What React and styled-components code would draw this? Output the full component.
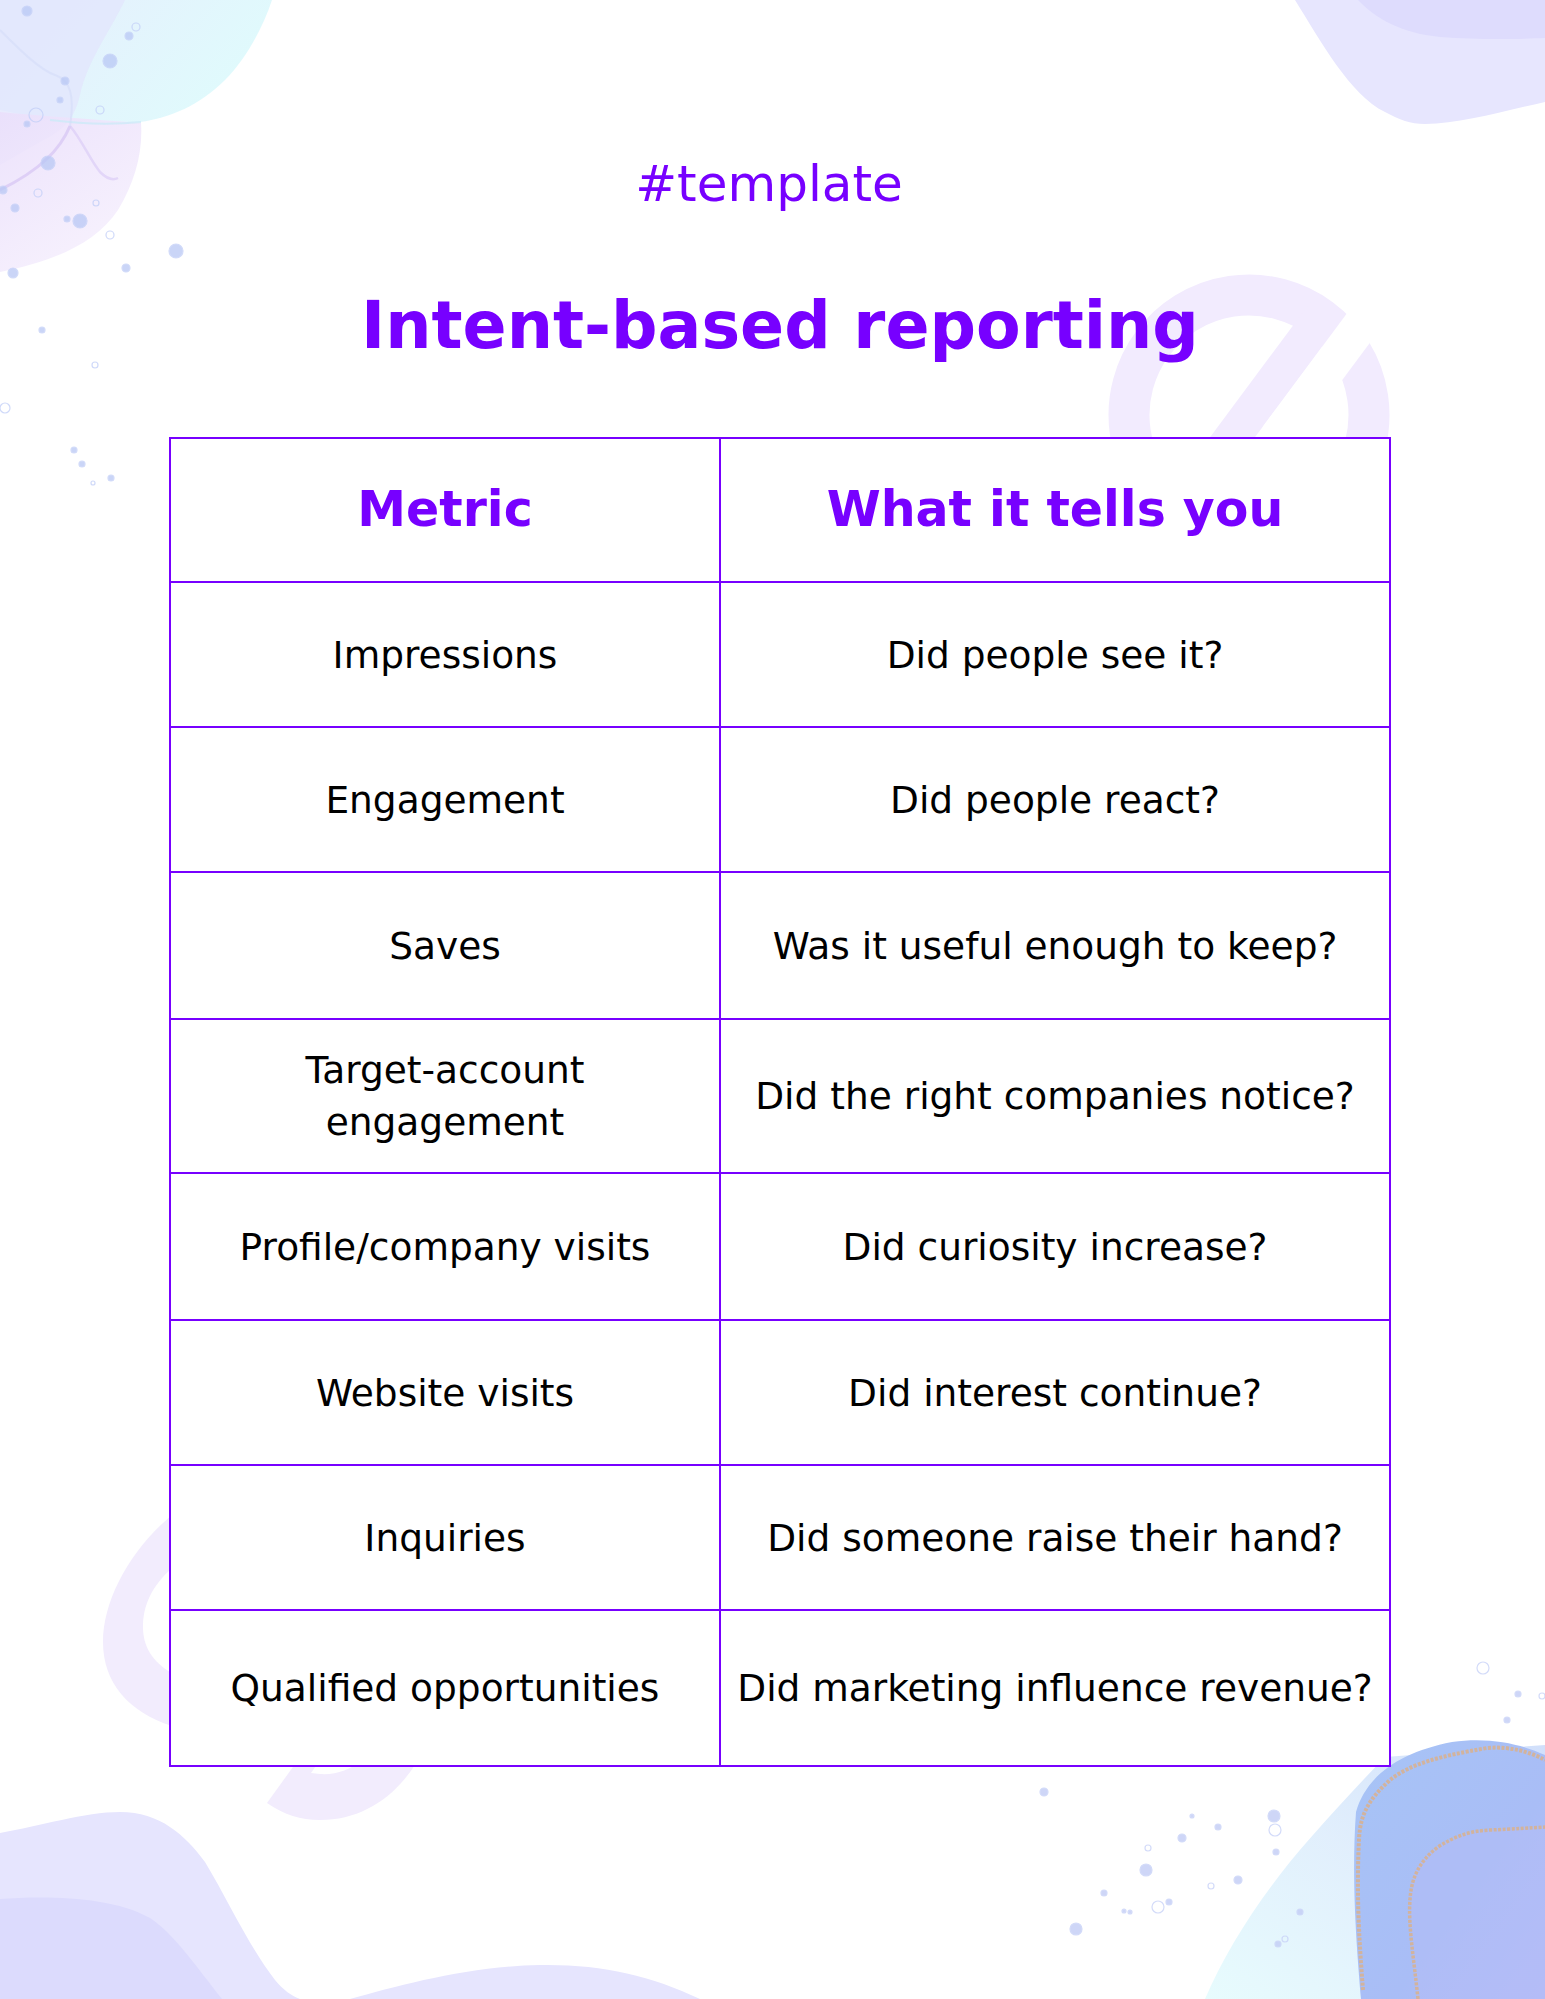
import React from 'react';
import styled, { createGlobalStyle } from 'styled-components';

const GlobalStyle = createGlobalStyle`
  html, body { margin: 0; padding: 0; background: #ffffff; }
  body { font-family: "DejaVu Sans", "Liberation Sans", sans-serif; }
  * { box-sizing: border-box; }
`;

const VIOLET = '#7700ff';

const Page = styled.div`
  position: relative;
  width: 1545px;
  min-height: 1999px;
  overflow: hidden;
  background: #ffffff;
`;

const Backdrop = styled.svg`
  position: absolute;
  inset: 0;
  width: 1545px;
  height: 1999px;
  pointer-events: none;
  z-index: 0;
`;

const Content = styled.main`
  position: relative;
  z-index: 1;
  width: 1222px;
  margin-left: 169px;
  padding-top: 154px;
  display: flex;
  flex-direction: column;
  align-items: center;
`;

const Tag = styled.div`
  font-family: "DejaVu Sans", sans-serif;
  font-weight: 400;
  font-size: 50px;
  line-height: 60px;
  color: ${VIOLET};
  margin-right: 22px;
`;

const Title = styled.h1`
  margin: 72px 0 0;
  font-family: "DejaVu Sans", sans-serif;
  font-weight: 700;
  font-size: 65px;
  line-height: 80px;
  color: ${VIOLET};
`;

const Grid = styled.div`
  margin-top: 71px;
  width: 1222px;
  display: grid;
  grid-template-columns: 550px 670px;
  border-top: 2px solid ${VIOLET};
  border-left: 2px solid ${VIOLET};
  background: #ffffff;
`;

const Cell = styled.div`
  height: ${(p) => p.$h}px;
  border-right: 2px solid ${VIOLET};
  border-bottom: 2px solid ${VIOLET};
  display: flex;
  align-items: center;
  justify-content: center;
  text-align: center;
  padding: 0 8px;
  white-space: pre-line;
  font-family: "DejaVu Sans", sans-serif;
  ${(p) =>
    p.$head
      ? `font-weight: 700; font-size: 49px; line-height: 60px; color: ${VIOLET};`
      : `font-weight: 400; font-size: 37.5px; line-height: 52px; color: #000000;`}
`;

const rows = [
  ['Impressions', 'Did people see it?', 145],
  ['Engagement', 'Did people react?', 145],
  ['Saves', 'Was it useful enough to keep?', 147],
  ['Target-account\nengagement', 'Did the right companies notice?', 154],
  ['Profile/company visits', 'Did curiosity increase?', 147],
  ['Website visits', 'Did interest continue?', 145],
  ['Inquiries', 'Did someone raise their hand?', 145],
  ['Qualified opportunities', 'Did marketing influence revenue?', 156],
];

const topLeftBubbles = [
  [27, 11, 5], [110, 61, 7], [136, 27, 4], [129, 36, 4], [65, 81, 4], [36, 115, 7],
  [27, 124, 3], [48, 163, 7], [38, 193, 4], [80, 221, 7], [67, 219, 3], [96, 203, 3],
  [15, 208, 4], [176, 251, 7], [110, 235, 4], [13, 273, 5], [126, 268, 4], [5, 408, 5],
  [74, 450, 3], [82, 464, 3], [93, 483, 2], [111, 478, 3], [42, 330, 3], [95, 365, 3],
  [3, 190, 4], [60, 100, 3], [100, 110, 4],
];

const bottomRightBubbles = [
  [1274, 1816, 6], [1275, 1830, 6], [1276, 1852, 3], [1146, 1870, 6], [1158, 1907, 6],
  [1076, 1929, 6], [1182, 1838, 4], [1148, 1848, 3], [1238, 1880, 4], [1104, 1893, 3],
  [1211, 1886, 3], [1169, 1902, 3], [1278, 1944, 3], [1285, 1939, 3], [1044, 1792, 4],
  [1218, 1827, 3], [1483, 1668, 6], [1518, 1694, 3], [1507, 1720, 3], [1542, 1696, 3],
  [1130, 1912, 2], [1124, 1911, 2], [1253, 1758, 3], [1192, 1816, 2], [1300, 1912, 3],
];

function RingMark() {
  return (
    <g transform="translate(1249 415) rotate(36.6)">
      <mask id="ringGap" maskUnits="userSpaceOnUse" x="-220" y="-220" width="440" height="440">
        <rect x="-220" y="-220" width="440" height="440" fill="#fff" />
        <rect x="18" y="-220" width="36" height="220" fill="#000" />
      </mask>
      <g mask="url(#ringGap)">
        <circle r="120" fill="none" stroke="#f2ebfe" strokeWidth="41" />
        <rect x="-18" y="-139" width="36" height="278" fill="#f2ebfe" />
      </g>
    </g>
  );
}

function Decorations() {
  return (
    <Backdrop viewBox="0 0 1545 1999" aria-hidden="true">
      <defs>
        <linearGradient id="tlCyan" x1="0" y1="0" x2="1" y2="0.4">
          <stop offset="0" stopColor="#e4ecfd" />
          <stop offset="1" stopColor="#dcfafc" />
        </linearGradient>
        <linearGradient id="tlPurple" x1="0" y1="0" x2="0.6" y2="1">
          <stop offset="0" stopColor="#eadffb" />
          <stop offset="1" stopColor="#f6f0fd" />
        </linearGradient>
        <linearGradient id="brBlue" x1="0" y1="0" x2="1" y2="1">
          <stop offset="0" stopColor="#a7c4f6" />
          <stop offset="0.6" stopColor="#a9bdf6" />
          <stop offset="1" stopColor="#b7bcf8" />
        </linearGradient>
        <linearGradient id="brWash" x1="0" y1="1" x2="1" y2="0">
          <stop offset="0" stopColor="#e3fbfd" />
          <stop offset="0.5" stopColor="#dcecfc" />
          <stop offset="1" stopColor="#c9dafa" />
        </linearGradient>
      </defs>

      {/* top-right lavender blob */}
      <path d="M1295,0 C1320,40 1350,95 1385,112 C1400,120 1410,124 1425,124 C1460,124 1500,112 1545,102 L1545,0 Z" fill="#e7e6fe" />
      <path d="M1358,0 C1375,18 1400,33 1440,37 C1480,40 1520,39 1545,38 L1545,0 Z" fill="#dedcfd" />

      {/* ring mark behind title */}
      <RingMark />

      {/* bottom-left ring pieces */}
      <path d="M172,1515 C130,1550 103,1600 103,1642 C103,1682 128,1712 172,1726 L172,1673 C152,1662 143,1646 143,1627 C143,1605 152,1586 172,1568 Z" fill="#f2ecfd" />
      <path d="M298,1760 L267,1803 C285,1815 300,1820 320,1820 C362,1820 396,1797 418,1760 L362,1760 C350,1770 336,1775 320,1774 L311,1773 L320,1760 Z" fill="#f2ecfd" />

      {/* bottom-left lavender blobs */}
      <path d="M0,1833 C40,1826 85,1812 120,1812 C160,1812 185,1835 205,1862 C228,1900 248,1945 275,1980 C283,1990 292,1996 300,1999 L0,1999 Z" fill="#e6e5fe" />
      <path d="M350,1999 C400,1985 470,1966 540,1965 C600,1964 650,1975 700,1999 Z" fill="#e6e5fe" />
      <path d="M0,1899 C40,1896 110,1895 150,1918 C175,1935 195,1965 222,1999 L0,1999 Z" fill="#dcdbfd" />

      {/* top-left watercolor */}
      <path d="M0,0 L272,0 C262,30 245,60 225,80 C200,105 170,118 140,122 C110,126 80,125 50,120 L0,110 Z" fill="url(#tlCyan)" opacity="0.9" />
      <path d="M0,0 L125,0 C108,35 88,60 80,95 C74,122 60,132 40,142 L0,165 Z" fill="#e2e6fc" opacity="0.8" />
      <path d="M0,112 C40,116 90,119 141,123 C143,152 135,182 118,210 C95,245 50,262 0,272 Z" fill="url(#tlPurple)" opacity="0.9" />
      <path d="M70,126 C60,150 40,170 0,190" fill="none" stroke="#d6c4f4" strokeWidth="3" opacity="0.7" />
      <path d="M70,126 C82,140 90,160 100,172 C108,180 114,180 118,178" fill="none" stroke="#dccdf6" strokeWidth="2.5" opacity="0.7" />
      <path d="M50,120 C90,125 120,124 141,122" fill="none" stroke="#cdeaf7" strokeWidth="2" opacity="0.8" />
      <path d="M0,30 C20,50 40,70 55,75 C70,80 75,95 70,126" fill="none" stroke="#d4dcf8" strokeWidth="2" opacity="0.6" />
      {topLeftBubbles.map(([x, y, r], i) => (
        <circle
          key={`tl${i}`}
          cx={x}
          cy={y}
          r={r}
          fill={i % 3 === 2 ? 'none' : '#b9c8f5'}
          stroke="#c3cff7"
          strokeWidth="1.2"
          opacity={i % 3 === 2 ? 0.8 : 0.75}
        />
      ))}

      {/* bottom-right watercolor */}
      <path d="M1205,1999 C1228,1945 1268,1885 1313,1835 C1335,1810 1358,1785 1385,1757 L1545,1745 L1545,1999 Z" fill="url(#brWash)" opacity="0.85" />
      <path d="M1361,1999 C1357,1950 1351,1880 1356,1812 C1366,1776 1400,1752 1452,1742 C1490,1737 1520,1744 1545,1755 L1545,1999 Z" fill="url(#brBlue)" />
      <path d="M1417,1999 C1414,1960 1408,1920 1412,1880 C1420,1850 1450,1834 1490,1830 C1515,1828 1530,1827 1545,1827 L1545,1999 Z" fill="#b2bdf7" opacity="0.6" />
      <path d="M1363,1990 C1360,1950 1356,1900 1359,1840 C1360,1815 1368,1800 1390,1780 C1410,1764 1440,1756 1487,1748 C1510,1746 1530,1752 1545,1760" fill="none" stroke="#d2b39d" strokeWidth="4" strokeDasharray="3 1.5" />
      <path d="M1418,1999 C1414,1960 1408,1925 1410,1900 C1411,1880 1418,1862 1438,1847 C1455,1836 1470,1831 1490,1830 C1515,1829 1530,1828 1545,1827" fill="none" stroke="#d2b39d" strokeWidth="3.5" strokeDasharray="3 1.5" />
      {bottomRightBubbles.map(([x, y, r], i) => (
        <circle
          key={`br${i}`}
          cx={x}
          cy={y}
          r={r}
          fill={i % 3 === 1 ? 'none' : '#c3cdf6'}
          stroke="#c8d2f7"
          strokeWidth="1.2"
          opacity="0.8"
        />
      ))}
    </Backdrop>
  );
}

export default function App() {
  return (
    <>
      <GlobalStyle />
      <Page>
        <Decorations />
        <Content>
          <Tag>#template</Tag>
          <Title>Intent-based reporting</Title>
          <Grid>
            <Cell $head $h={144}>Metric</Cell>
            <Cell $head $h={144}>What it tells you</Cell>
            {rows.map(([metric, meaning, h]) => (
              <React.Fragment key={metric}>
                <Cell $h={h}>{metric}</Cell>
                <Cell $h={h}>{meaning}</Cell>
              </React.Fragment>
            ))}
          </Grid>
        </Content>
      </Page>
    </>
  );
}
